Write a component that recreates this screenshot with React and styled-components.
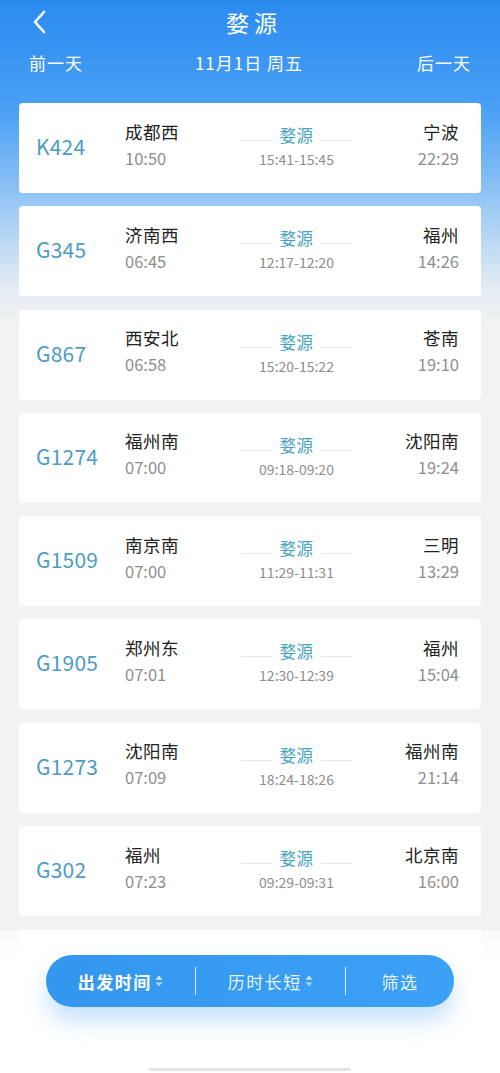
import React from "react";
import styled, { createGlobalStyle } from "styled-components";

const Global = createGlobalStyle`
  html, body { margin: 0; padding: 0; }
  body {
    font-family: "Noto Sans CJK SC", "Noto Sans", sans-serif;
    background: #f2f2f2;
  }
  * { box-sizing: border-box; }
`;

const Page = styled.div`
  position: relative;
  width: 500px;
  min-height: 1073px;
  overflow: hidden;
  background: linear-gradient(
    180deg,
    #2b8bf0 0px,
    #4aa0f4 110px,
    #7cb9f5 170px,
    #b5d6f3 235px,
    #e6edf4 290px,
    #f2f2f2 330px,
    #f2f2f2 100%
  );
`;

const TopBar = styled.div`
  position: relative;
  height: 43px;
  display: flex;
  align-items: center;
  justify-content: center;
`;

const Back = styled.div`
  position: absolute;
  left: 28px;
  top: 9px;
  width: 22px;
  height: 26px;
  display: flex;
  align-items: center;
  justify-content: center;
`;

const Title = styled.div`
  color: #fff;
  font-size: 23px;
  letter-spacing: 5px;
  margin-left: 8px;
  font-weight: 400;
`;

const DateRow = styled.div`
  display: flex;
  justify-content: space-between;
  align-items: center;
  padding: 0 29px 0 29px;
  height: 38px;
  color: #fff;
  font-size: 17px;
  letter-spacing: 1px;
`;

const DateText = styled.span`
  margin-right: 2px;
`;

const List = styled.div`
  display: flex;
  flex-direction: column;
  gap: 13.3px;
  padding: 22px 19px 0;
`;

const Card = styled.div`
  height: 90px;
  background: #fff;
  border-radius: 4px;
  display: grid;
  grid-template-columns: 89px 116px 111px 1fr;
  align-items: center;
  padding: 0 22px 0 17px;
`;

const TrainNo = styled.div`
  color: #4c9cc6;
  font-size: 21px;
  letter-spacing: 0.2px;
  margin-top: -4px;
`;

const Station = styled.div`
  display: flex;
  flex-direction: column;
  align-items: ${(p) => (p.$right ? "flex-end" : "flex-start")};
  margin-top: -7px;
`;

const StationName = styled.div`
  color: #222;
  font-size: 17.5px;
  line-height: 24px;
  letter-spacing: 0.5px;
`;

const Time = styled.div`
  color: #8e8e8e;
  font-size: 16.5px;
  line-height: 24px;
  margin-top: 2px;
`;

const Middle = styled.div`
  display: flex;
  flex-direction: column;
  align-items: center;
  margin-top: -3px;
`;

const MidTop = styled.div`
  position: relative;
  width: 100%;
  display: flex;
  justify-content: center;
  align-items: center;
  height: 22px;
`;

const Line = styled.span`
  position: absolute;
  top: 16px;
  ${(p) => (p.$side === "left" ? "left: 0;" : "right: 0;")}
  width: 31px;
  height: 1px;
  background: #e8e8e8;
`;

const MidName = styled.div`
  color: #47a4c4;
  font-size: 16.5px;
  letter-spacing: 0.5px;
`;

const MidTime = styled.div`
  color: #8e8e8e;
  font-size: 14px;
  line-height: 20px;
  margin-top: 3px;
`;

const BottomArea = styled.div`
  position: absolute;
  left: 0;
  right: 0;
  bottom: 0;
  height: 143px;
  background: linear-gradient(
    180deg,
    rgba(255, 255, 255, 0.55) 0px,
    rgba(255, 255, 255, 0.95) 25px,
    #fff 40px
  );
  display: flex;
  flex-direction: column;
  align-items: center;
  padding-top: 25px;
`;

const Pill = styled.div`
  width: 408px;
  height: 52px;
  border-radius: 26px;
  background: linear-gradient(90deg, #3497ef, #3aa1f5);
  box-shadow: 0 14px 22px rgba(70, 160, 245, 0.3);
  display: flex;
  align-items: center;
`;

const PillItem = styled.div`
  flex: ${(p) => p.$flex || 1};
  display: flex;
  justify-content: center;
  align-items: center;
  color: ${(p) => (p.$active ? "#fff" : "rgba(255,255,255,0.9)")};
  font-size: 17px;
  font-weight: ${(p) => (p.$active ? 700 : 400)};
  letter-spacing: 1.5px;
  gap: 3px;
`;

const Sep = styled.div`
  width: 1.5px;
  height: 28px;
  background: rgba(255, 255, 255, 0.85);
`;

const Home = styled.div`
  margin-top: auto;
  margin-bottom: 2px;
  width: 202px;
  height: 3px;
  border-radius: 2px;
  background: #e4e4e4;
`;

const SortIcon = ({ dim }) => (
  <svg width="8" height="12" viewBox="0 0 8 12">
    <path d="M4 0.5 L7.5 4.8 H0.5 Z" fill={dim ? "rgba(255,255,255,0.75)" : "rgba(255,255,255,0.8)"} />
    <path d="M4 11.5 L7.5 7.2 H0.5 Z" fill={dim ? "rgba(255,255,255,0.55)" : "rgba(255,255,255,0.6)"} />
  </svg>
);

const trains = [
  ["K424", "成都西", "10:50", "15:41-15:45", "宁波", "22:29"],
  ["G345", "济南西", "06:45", "12:17-12:20", "福州", "14:26"],
  ["G867", "西安北", "06:58", "15:20-15:22", "苍南", "19:10"],
  ["G1274", "福州南", "07:00", "09:18-09:20", "沈阳南", "19:24"],
  ["G1509", "南京南", "07:00", "11:29-11:31", "三明", "13:29"],
  ["G1905", "郑州东", "07:01", "12:30-12:39", "福州", "15:04"],
  ["G1273", "沈阳南", "07:09", "18:24-18:26", "福州南", "21:14"],
  ["G302", "福州", "07:23", "09:29-09:31", "北京南", "16:00"],
];

export default function App() {
  return (
    <>
      <Global />
      <Page>
        <TopBar>
          <Back>
            <svg width="14" height="24" viewBox="0 0 14 24">
              <path d="M12 2 L3 12 L12 22" stroke="#fff" strokeWidth="2.6" fill="none" strokeLinecap="round" strokeLinejoin="round" />
            </svg>
          </Back>
          <Title>婺源</Title>
        </TopBar>
        <DateRow>
          <span>前一天</span>
          <DateText>11月1日 周五</DateText>
          <span>后一天</span>
        </DateRow>
        <List>
          {trains.map((t) => (
            <Card key={t[0]}>
              <TrainNo>{t[0]}</TrainNo>
              <Station>
                <StationName>{t[1]}</StationName>
                <Time>{t[2]}</Time>
              </Station>
              <Middle>
                <MidTop>
                  <Line $side="left" />
                  <MidName>婺源</MidName>
                  <Line $side="right" />
                </MidTop>
                <MidTime>{t[3]}</MidTime>
              </Middle>
              <Station $right>
                <StationName>{t[4]}</StationName>
                <Time>{t[5]}</Time>
              </Station>
            </Card>
          ))}
          <Card />
        </List>
        <BottomArea>
          <Pill>
            <PillItem $active $flex={1.1}>
              出发时间<SortIcon />
            </PillItem>
            <Sep />
            <PillItem $flex={1.1}>
              历时长短<SortIcon dim />
            </PillItem>
            <Sep />
            <PillItem $flex={0.8}>筛选</PillItem>
          </Pill>
          <Home />
        </BottomArea>
      </Page>
    </>
  );
}
